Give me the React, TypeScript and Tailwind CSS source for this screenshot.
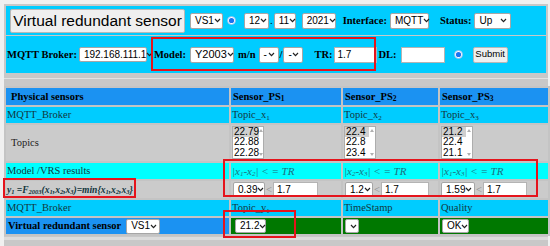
import React from "react";

const sans = "font-['Liberation_Sans',Arial,sans-serif]";
const serif = "font-['Liberation_Serif','Times_New_Roman',serif]";

function Chevron() {
    return (
        <svg width="7" height="5" viewBox="0 0 7 5" className="shrink-0">
            <path d="M1 1 L3.5 3.6 L6 1" fill="none" stroke="#222" strokeWidth="1.2" />
        </svg>
    );
}

// fake select box, width passed in as full class name
function Sel({ text, className }: { text?: string; className: string }) {
    return (
        <span
            className={`inline-flex items-center justify-between bg-white border border-[#a6a6a6] rounded-[2px] pl-[4px] pr-[3px] text-[10px] leading-none font-normal not-italic text-black ${sans} ${className}`}
        >
            <span>{text}</span>
            <Chevron />
        </span>
    );
}

function Input({ value, className }: { value?: string; className: string }) {
    return (
        <span
            className={`inline-flex items-center bg-white border border-[#b4b4b4] px-[3px] text-[10px] leading-none font-normal text-black ${sans} ${className}`}
        >
            {value}
        </span>
    );
}

function Radio({ className }: { className: string }) {
    return (
        <svg width="9" height="9" viewBox="0 0 9 9" className={className}>
            <circle cx="4.5" cy="4.5" r="4" fill="#fff" stroke="#8ab8f0" strokeWidth="0.8" />
            <circle cx="4.5" cy="4.5" r="2.6" fill="#1a73f0" />
        </svg>
    );
}

function ListBox({ items }: { items: string[] }) {
    return (
        <div className={`flex bg-white border border-[#adadad] w-[32px] h-[33px] ${sans}`}>
            <div className="flex flex-col flex-1 text-[10px] leading-[10.3px] text-black">
                {items.map((v, i) => (
                    <span key={v} className={i === 0 ? "bg-[#cfcfcf] pl-[1px]" : "pl-[1px]"}>
                        {v}
                    </span>
                ))}
            </div>
            <div className="w-[6px] flex flex-col justify-between items-center py-[2px]">
                <svg width="4" height="3" viewBox="0 0 4 3"><path d="M0 3 L2 0 L4 3 Z" fill="#b0b0b0" /></svg>
                <svg width="4" height="3" viewBox="0 0 4 3"><path d="M0 0 L2 3 L4 0 Z" fill="#b0b0b0" /></svg>
            </div>
        </div>
    );
}

function Diff({ a, b }: { a: string; b: string }) {
    return (
        <span className={`italic text-[11px] text-[#1d6f80] ${serif}`}>
            |x<sub className="text-[7px]">{a}</sub>-x<sub className="text-[7px]">{b}</sub>| &lt; = TR
        </span>
    );
}

const redBox = "absolute border-2 border-[#e5141c] pointer-events-none";

export default function App() {
    return (
        <div className="relative w-[550px] h-[246px] overflow-hidden bg-[#f0f0f0]">
            <div className="ml-[4px] mt-[4px] w-[544px] h-[250px] bg-[#c8c8c8] pt-[2px] px-[2px]">
                {/* row 1 */}
                <div className={`flex items-center h-[29px] bg-[#00ccff] pl-[4px] text-[10.5px] font-bold text-black ${serif}`}>
                    <span
                        className={`inline-flex items-center h-[24px] w-[175px] justify-center bg-[#efefef] border border-[#b8b8b8] rounded-[2px] text-[15.5px] font-normal ${sans}`}
                    >
                        Virtual redundant sensor
                    </span>
                    <Sel text="VS1" className="ml-[5px] w-[33px] h-[16px] text-[10.5px]" />
                    <Radio className="ml-[4px]" />
                    <Sel text="12" className="ml-[8px] w-[25px] h-[16px] text-[10.5px]" />
                    <span className="mx-[1px] font-normal">.</span>
                    <Sel text="11" className="w-[22px] h-[16px] text-[10.5px]" />
                    <Sel text="2021" className="ml-[6px] w-[34px] h-[16px] text-[10.5px]" />
                    <span className="ml-[7px]">Interface:</span>
                    <Sel text="MQTT" className="ml-[3px] w-[39px] h-[16px] text-[10.5px]" />
                    <span className="ml-[11px]">Status:</span>
                    <Sel text="Up" className="ml-[3px] w-[37px] h-[16px] text-[10.5px]" />
                </div>

                {/* row 2 */}
                <div className={`flex items-center h-[37px] mt-[1px] bg-[#00ccff] pl-[1px] text-[10.5px] font-bold text-black ${serif}`}>
                    <span>MQTT Broker:</span>
                    <Sel text="192.168.111.1" className="ml-[2px] w-[68px] h-[15px] text-[9px]" />
                    <span className="ml-[7px]">Model:</span>
                    <Sel text="Y2003" className="ml-[4px] w-[44px] h-[16px] text-[11px]" />
                    <span className="ml-[4px]">m/n</span>
                    <Sel text="-" className="ml-[3px] w-[20px] h-[16px]" />
                    <span className="mx-[1px]">/</span>
                    <Sel text="-" className="w-[20px] h-[16px]" />
                    <span className="ml-[11px]">TR:</span>
                    <Input value="1.7" className="ml-[1px] w-[43px] h-[16px]" />
                    <span className="ml-[2px]">DL:</span>
                    <Input className="ml-[4px] w-[44px] h-[16px]" />
                    <Radio className="ml-[9px]" />
                    <span
                        className={`ml-[10px] inline-flex items-center justify-center w-[35px] h-[16px] bg-[#efefef] border border-[#b8b8b8] rounded-[2px] text-[9.5px] font-normal ${sans}`}
                    >
                        Submit
                    </span>
                </div>

                <div className="h-[5px]" />
                <div className="h-[1px] bg-[#e2e2e2] -mx-[2px]" />
                <div className="h-[7px]" />

                {/* sensor table */}
                <table
                    className={`-ml-[2px] border-separate border-spacing-[2px] table-fixed w-[544px] bg-[#c4c4c4] text-[10.5px] leading-[12px] text-[#123840] ${serif}`}
                >
                    <colgroup>
                        <col className="w-[223px]" />
                        <col className="w-[110px]" />
                        <col className="w-[95px]" />
                        <col className="w-[108px]" />
                    </colgroup>
                    <tbody>
                        <tr className="h-[17px] bg-[#1b92f2] font-bold text-black">
                            <td className="pl-[5px]">Physical sensors</td>
                            <td className="pl-[2px]">Sensor_PS<sub className="text-[7.5px]">1</sub></td>
                            <td className="pl-[2px]">Sensor_PS<sub className="text-[7.5px]">2</sub></td>
                            <td className="pl-[2px]">Sensor_PS<sub className="text-[7.5px]">3</sub></td>
                        </tr>
                        <tr className="h-[16px] bg-[#00ccff]">
                            <td className="pl-[1px]">MQTT_Broker</td>
                            <td className="pl-[1px]">Topic_x<sub className="text-[7px]">1</sub></td>
                            <td className="pl-[1px]">Topic_x<sub className="text-[7px]">2</sub></td>
                            <td className="pl-[1px]">Topic_x<sub className="text-[7px]">3</sub></td>
                        </tr>
                        <tr className="h-[36px] bg-[#cbcbcb] text-[#222]">
                            <td className="pl-[5px]">Topics</td>
                            <td className="pl-[1px] align-top pt-[1px]"><ListBox items={["22.79", "22.88", "22.28"]} /></td>
                            <td className="pl-[1px] align-top pt-[1px]"><ListBox items={["22.4", "22.8", "23.4"]} /></td>
                            <td className="pl-[1px] align-top pt-[1px]"><ListBox items={["21.2", "22.4", "21.1"]} /></td>
                        </tr>
                        <tr className="h-[16px] bg-[#00ffff]">
                            <td className="pl-[1px]">Model /VRS results</td>
                            <td className="pl-[1px]"><Diff a="1" b="2" /></td>
                            <td className="pl-[1px]"><Diff a="2" b="3" /></td>
                            <td className="pl-[1px]"><Diff a="1" b="3" /></td>
                        </tr>
                        <tr className="h-[17px] bg-[#cbcbcb]">
                            <td className="pl-[1px]">
                                <span className="italic font-bold text-[9.5px] text-[#10343c] whitespace-nowrap">
                                    y<sub className="text-[6.5px]">1</sub> =F<sub className="text-[6.5px]">2003</sub>(x<sub className="text-[6.5px]">1</sub>,x<sub className="text-[6.5px]">2</sub>,x<sub className="text-[6.5px]">3</sub>)=min{"{"}x<sub className="text-[6.5px]">1</sub>,x<sub className="text-[6.5px]">2</sub>,x<sub className="text-[6.5px]">3</sub>{"}"}
                                </span>
                            </td>
                            <td className="pl-[2px]">
                                <div className="flex items-center">
                                    <Sel text="0.39" className="w-[32px] h-[15px]" />
                                    <span className="text-[#8a8a8a] px-[1px]">&lt;</span>
                                    <Input value="1.7" className="w-[45px] h-[15px]" />
                                </div>
                            </td>
                            <td className="pl-[2px]">
                                <div className="flex items-center">
                                    <Sel text="1.2" className="w-[28px] h-[15px]" />
                                    <span className="text-[#8a8a8a] px-[1px]">&lt;</span>
                                    <Input value="1.7" className="w-[48px] h-[15px]" />
                                </div>
                            </td>
                            <td className="pl-[1px]">
                                <div className="flex items-center">
                                    <Sel text="1.59" className="w-[34px] h-[15px]" />
                                    <span className="text-[#8a8a8a] px-[1px]">&lt;</span>
                                    <Input value="1.7" className="w-[44px] h-[15px]" />
                                </div>
                            </td>
                        </tr>
                        <tr className="h-[16px] bg-[#00ccff]">
                            <td className="pl-[1px]">MQTT_Broker</td>
                            <td className="pl-[1px]">Topic_y<sub className="text-[7px]">1</sub></td>
                            <td className="pl-[1px]">TimeStamp</td>
                            <td className="pl-[1px]">Quality</td>
                        </tr>
                        <tr className="h-[16px]">
                            <td className="pl-[2px] bg-[#1b92f2] font-bold text-black">
                                <div className="flex items-center">
                                    Virtual redundant sensor
                                    <Sel text="VS1" className="ml-[5px] w-[34px] h-[15px] text-[10.5px]" />
                                </div>
                            </td>
                            <td className="pl-[4px] bg-[#007800]"><div className="flex"><Sel text="21.2" className="w-[31px] h-[14px]" /></div></td>
                            <td className="pl-[2px] bg-[#007800]"><div className="flex"><Sel className="w-[14px] h-[14px]" /></div></td>
                            <td className="pl-[2px] bg-[#007800]"><div className="flex"><Sel text="OK" className="w-[27px] h-[14px]" /></div></td>
                        </tr>
                    </tbody>
                </table>
                <div className="h-[1px]" />
                <div className="h-[3px] bg-[#dcdcdc] -mx-[2px]" />
            </div>

            {/* red annotation frames */}
            <div className={`${redBox} left-[151px] top-[37px] w-[225px] h-[34px]`} />
            <div className={`${redBox} left-[3px] top-[178px] w-[133px] h-[20px]`} />
            <div className={`${redBox} left-[223px] top-[159px] w-[315px] h-[38px]`} />
            <div className={`${redBox} left-[223px] top-[210px] w-[73px] h-[28px]`} />
        </div>
    );
}
